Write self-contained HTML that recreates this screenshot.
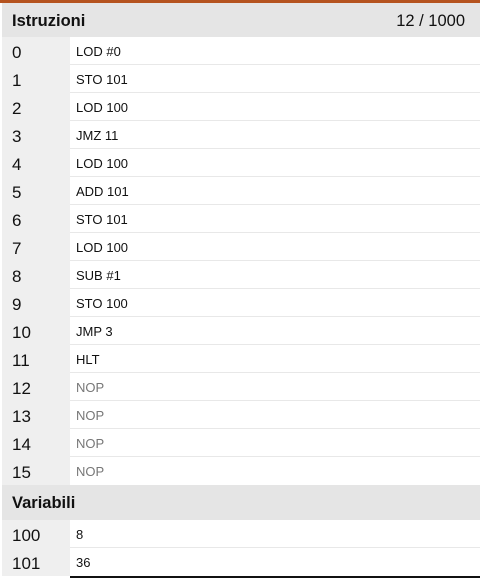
<!DOCTYPE html>
<html><head><style>
body{margin:0;width:480px;height:578px;background:#fff;font-family:"Liberation Sans",sans-serif;position:relative;overflow:hidden}
.top{position:absolute;left:0;top:0;width:480px;height:3px;background:#b5531f}
.hd{position:absolute;left:2px;width:478px;background:#e5e5e5;font-weight:bold;font-size:16px;color:#111;box-sizing:border-box;padding-left:10px}
.row{position:absolute;left:2px;width:478px;height:28px}
.idx{position:absolute;left:0;top:0;width:68px;height:28px;background:#efefef;font-size:17px;color:#111;line-height:31px;padding-left:10px;box-sizing:border-box}
.val{position:absolute;left:68px;top:0;right:0;height:27px;border-bottom:1px solid #e8e8e8;font-size:13px;line-height:29px;padding-left:6px;color:#111}
.nop{color:#777}
</style></head><body>
<div class="top"></div>
<div class="hd" style="top:3px;height:34px;line-height:36px;font-size:16.5px">Istruzioni<span style="position:absolute;right:15px;font-weight:normal">12 / 1000</span></div>
<div class="row" style="top:37px"><div class="idx">0</div><div class="val">LOD #0</div></div>
<div class="row" style="top:65px"><div class="idx">1</div><div class="val">STO 101</div></div>
<div class="row" style="top:93px"><div class="idx">2</div><div class="val">LOD 100</div></div>
<div class="row" style="top:121px"><div class="idx">3</div><div class="val">JMZ 11</div></div>
<div class="row" style="top:149px"><div class="idx">4</div><div class="val">LOD 100</div></div>
<div class="row" style="top:177px"><div class="idx">5</div><div class="val">ADD 101</div></div>
<div class="row" style="top:205px"><div class="idx">6</div><div class="val">STO 101</div></div>
<div class="row" style="top:233px"><div class="idx">7</div><div class="val">LOD 100</div></div>
<div class="row" style="top:261px"><div class="idx">8</div><div class="val">SUB #1</div></div>
<div class="row" style="top:289px"><div class="idx">9</div><div class="val">STO 100</div></div>
<div class="row" style="top:317px"><div class="idx">10</div><div class="val">JMP 3</div></div>
<div class="row" style="top:345px"><div class="idx">11</div><div class="val">HLT</div></div>
<div class="row" style="top:373px"><div class="idx">12</div><div class="val nop">NOP</div></div>
<div class="row" style="top:401px"><div class="idx">13</div><div class="val nop">NOP</div></div>
<div class="row" style="top:429px"><div class="idx">14</div><div class="val nop">NOP</div></div>
<div class="row" style="top:457px"><div class="idx">15</div><div class="val nop" style="border-bottom:none">NOP</div></div>
<div class="hd" style="top:485px;height:35px;line-height:37px;font-size:16.5px">Variabili</div>
<div class="row" style="top:520px"><div class="idx">100</div><div class="val">8</div></div>
<div class="row" style="top:548px"><div class="idx">101</div><div class="val" style="border-bottom:none">36</div></div>
<div style="position:absolute;left:70px;top:576px;width:410px;height:2px;background:#111"></div>
</body></html>
